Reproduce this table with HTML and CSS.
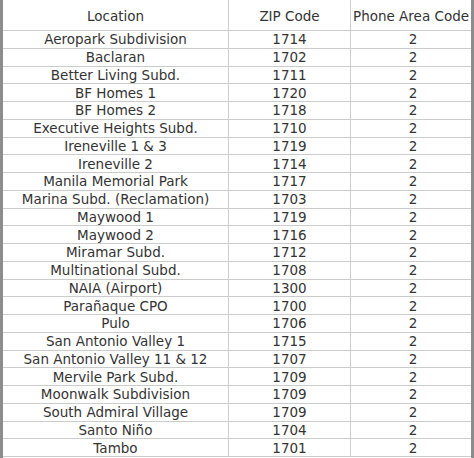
FILE: index.html
```html
<!DOCTYPE html>
<html>
<head>
<meta charset="utf-8">
<link rel="stylesheet" href="styles.css">
</head>
<body>
<div class="frame">
<div class="zip">
<div class="th">Location</div><div class="th">ZIP Code</div><div class="th">Phone Area Code</div>
<div class="td">Aeropark Subdivision</div><div class="td">1714</div><div class="td">2</div>
<div class="td">Baclaran</div><div class="td">1702</div><div class="td">2</div>
<div class="td">Better Living Subd.</div><div class="td">1711</div><div class="td">2</div>
<div class="td">BF Homes 1</div><div class="td">1720</div><div class="td">2</div>
<div class="td">BF Homes 2</div><div class="td">1718</div><div class="td">2</div>
<div class="td">Executive Heights Subd.</div><div class="td">1710</div><div class="td">2</div>
<div class="td">Ireneville 1 &amp; 3</div><div class="td">1719</div><div class="td">2</div>
<div class="td">Ireneville 2</div><div class="td">1714</div><div class="td">2</div>
<div class="td">Manila Memorial Park</div><div class="td">1717</div><div class="td">2</div>
<div class="td">Marina Subd. (Reclamation)</div><div class="td">1703</div><div class="td">2</div>
<div class="td">Maywood 1</div><div class="td">1719</div><div class="td">2</div>
<div class="td">Maywood 2</div><div class="td">1716</div><div class="td">2</div>
<div class="td">Miramar Subd.</div><div class="td">1712</div><div class="td">2</div>
<div class="td">Multinational Subd.</div><div class="td">1708</div><div class="td">2</div>
<div class="td">NAIA (Airport)</div><div class="td">1300</div><div class="td">2</div>
<div class="td">Parañaque CPO</div><div class="td">1700</div><div class="td">2</div>
<div class="td">Pulo</div><div class="td">1706</div><div class="td">2</div>
<div class="td">San Antonio Valley 1</div><div class="td">1715</div><div class="td">2</div>
<div class="td">San Antonio Valley 11 &amp; 12</div><div class="td">1707</div><div class="td">2</div>
<div class="td">Mervile Park Subd.</div><div class="td">1709</div><div class="td">2</div>
<div class="td">Moonwalk Subdivision</div><div class="td">1709</div><div class="td">2</div>
<div class="td">South Admiral Village</div><div class="td">1709</div><div class="td">2</div>
<div class="td">Santo Niño</div><div class="td">1704</div><div class="td">2</div>
<div class="td">Tambo</div><div class="td">1701</div><div class="td">2</div>
</div>
</div>
</body>
</html>
```
FILE: styles.css
```css
html, body {
  margin: 0;
  padding: 0;
  background: #ffffff;
}
.frame {
  width: 468px;
  height: 458px;
  overflow: hidden;
  border-left: 3px solid #8c8c8c;
  border-right: 3px solid #8c8c8c;
}
.zip {
  display: grid;
  grid-template-columns: 226px 122px 120px;
  grid-template-rows: 31px repeat(24, 17.75px);
  font-family: "DejaVu Sans", Verdana, sans-serif;
  font-size: 13.5px;
  color: #333333;
}
.th, .td {
  box-sizing: border-box;
  display: flex;
  align-items: center;
  justify-content: center;
  white-space: nowrap;
  border-right: 1px solid #cccccc;
  border-bottom: 1px solid #cccccc;
  line-height: 16px;
}
.th {
  padding-top: 1px;
}
.th:nth-child(3n), .td:nth-child(3n) {
  border-right: none;
}
.td:nth-child(3n) {
  padding-left: 4px;
}
```
